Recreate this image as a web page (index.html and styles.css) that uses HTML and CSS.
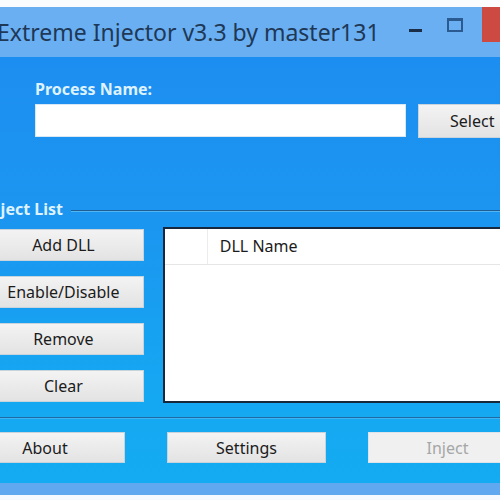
FILE: index.html
```html
<!DOCTYPE html>
<html>
<head>
<meta charset="utf-8">
<link rel="stylesheet" href="styles.css">
</head>
<body>
<div class="window">
  <div class="strip"></div>
  <div class="titlebar">
    <div class="title">Extreme Injector v3.3 by master131</div>
    <div class="min-btn"><div class="min-dash"></div></div>
    <div class="max-btn"><div class="max-box"></div></div>
    <div class="close"></div>
  </div>
  <div class="client">
    <div class="proc-label">Process Name:</div>
    <div class="proc-row">
      <div class="textbox"></div>
      <div class="btn select">Select</div>
    </div>
    <div class="group-head">
      <span class="legend">Inject List</span>
      <span class="rule"></span>
    </div>
    <div class="group-body">
      <div class="side">
        <div class="btn side-btn">Add DLL</div>
        <div class="btn side-btn">Enable/Disable</div>
        <div class="btn side-btn">Remove</div>
        <div class="btn side-btn">Clear</div>
      </div>
      <div class="listview">
        <div class="lv-head">
          <div class="lv-col0"></div>
          <div class="lv-col1">DLL Name</div>
        </div>
      </div>
    </div>
    <div class="separator"></div>
    <div class="bottom-row">
      <div class="btn bottom-btn about">About</div>
      <div class="btn bottom-btn">Settings</div>
      <div class="btn bottom-btn disabled">Inject</div>
    </div>
  </div>
  <div class="frame-bottom"></div>
</div>
</body>
</html>
```
FILE: styles.css
```css
html, body {
  margin: 0;
  padding: 0;
  width: 500px;
  height: 500px;
  overflow: hidden;
  background: #f4faff;
  font-family: "Noto Sans", "Open Sans", sans-serif;
}

.window {
  width: 580px;
  margin-left: -40px;
}

.strip {
  height: 7px;
  background: #fbfcfd;
}

.titlebar {
  height: 50px;
  background: #6aaff2;
  display: flex;
  align-items: flex-start;
}

.title {
  flex: none;
  width: 398px;
  margin-left: 37px;
  margin-top: 10px;
  font-size: 23px;
  line-height: 30px;
  color: #1e3856;
  white-space: nowrap;
  overflow: hidden;
}

.min-btn {
  flex: none;
  width: 40px;
  height: 35px;
  display: flex;
  justify-content: center;
}

.min-dash {
  width: 13px;
  height: 3px;
  margin-top: 22px;
  background: #1a2e48;
}

.max-btn {
  flex: none;
  width: 40px;
  height: 35px;
  display: flex;
  justify-content: center;
}

.max-box {
  width: 12px;
  height: 9px;
  margin-top: 11px;
  border: 2px solid #2a5a90;
  border-top-width: 3px;
}

.close {
  flex: none;
  width: 50px;
  height: 35px;
  background: #cd4a43;
  margin-left: 7px;
}

.client {
  height: 426px;
  background: linear-gradient(#1d8ef1 0%, #1b96f0 40%, #15a8f2 80%, #14abf2 100%);
  display: flex;
  flex-direction: column;
}

.proc-label {
  margin: 22px 0 0 75px;
  font-size: 16px;
  font-weight: bold;
  line-height: 20px;
  color: #dff3ff;
}

.proc-row {
  display: flex;
  gap: 12px;
  margin: 5px 0 0 75px;
}

.textbox {
  width: 371px;
  height: 33px;
  background: #ffffff;
  box-shadow: inset 0 0 0 1px #d8e8f4;
}

.btn {
  box-sizing: border-box;
  display: flex;
  align-items: center;
  justify-content: center;
  background: linear-gradient(#f3f3f3, #e3e3e3);
  border: 1px solid #c9d3dc;
  color: #1b1b1b;
  font-size: 16px;
  white-space: nowrap;
}

.select {
  width: 110px;
  height: 34px;
  justify-content: flex-start;
  padding-left: 31px;
}

.group-head {
  display: flex;
  align-items: center;
  margin: 60px 0 0 24px;
  height: 22px;
}

.legend {
  font-size: 16px;
  font-weight: bold;
  color: #dff3ff;
  line-height: 22px;
}

.rule {
  flex: 1;
  height: 1px;
  background: #1f5e94;
  border-bottom: 1px solid #52b6f4;
  margin-left: 8px;
  margin-top: 3px;
}

.group-body {
  display: flex;
  margin-top: 7px;
  margin-left: 23px;
}

.side {
  width: 162px;
  display: flex;
  flex-direction: column;
  gap: 15px;
  margin-top: 2px;
}

.side-btn {
  height: 32px;
}

.listview {
  margin-left: 19px;
  width: 380px;
  height: 176px;
  box-sizing: border-box;
  background: #ffffff;
  border: 2px solid #17283c;
}

.lv-head {
  display: flex;
  height: 35px;
  border-bottom: 1px solid #e6e6e6;
}

.lv-col0 {
  width: 42px;
  border-right: 1px solid #ececec;
}

.lv-col1 {
  padding-left: 12px;
  font-size: 16px;
  line-height: 35px;
  color: #1b1b1b;
}

.separator {
  margin-top: 14px;
  height: 1px;
  background: #1f6aa4;
  border-bottom: 1px solid #3fb4f4;
}

.bottom-row {
  display: flex;
  gap: 42px;
  margin: 13px 0 0 5px;
}

.bottom-btn {
  width: 159px;
  height: 31px;
}

.about {
  width: 160px;
}

.disabled {
  color: #a6a6a6;
  background: #f0f0f0;
  border-color: #dde3e8;
}

.frame-bottom {
  height: 12px;
  background: #60a9f1;
}
```
